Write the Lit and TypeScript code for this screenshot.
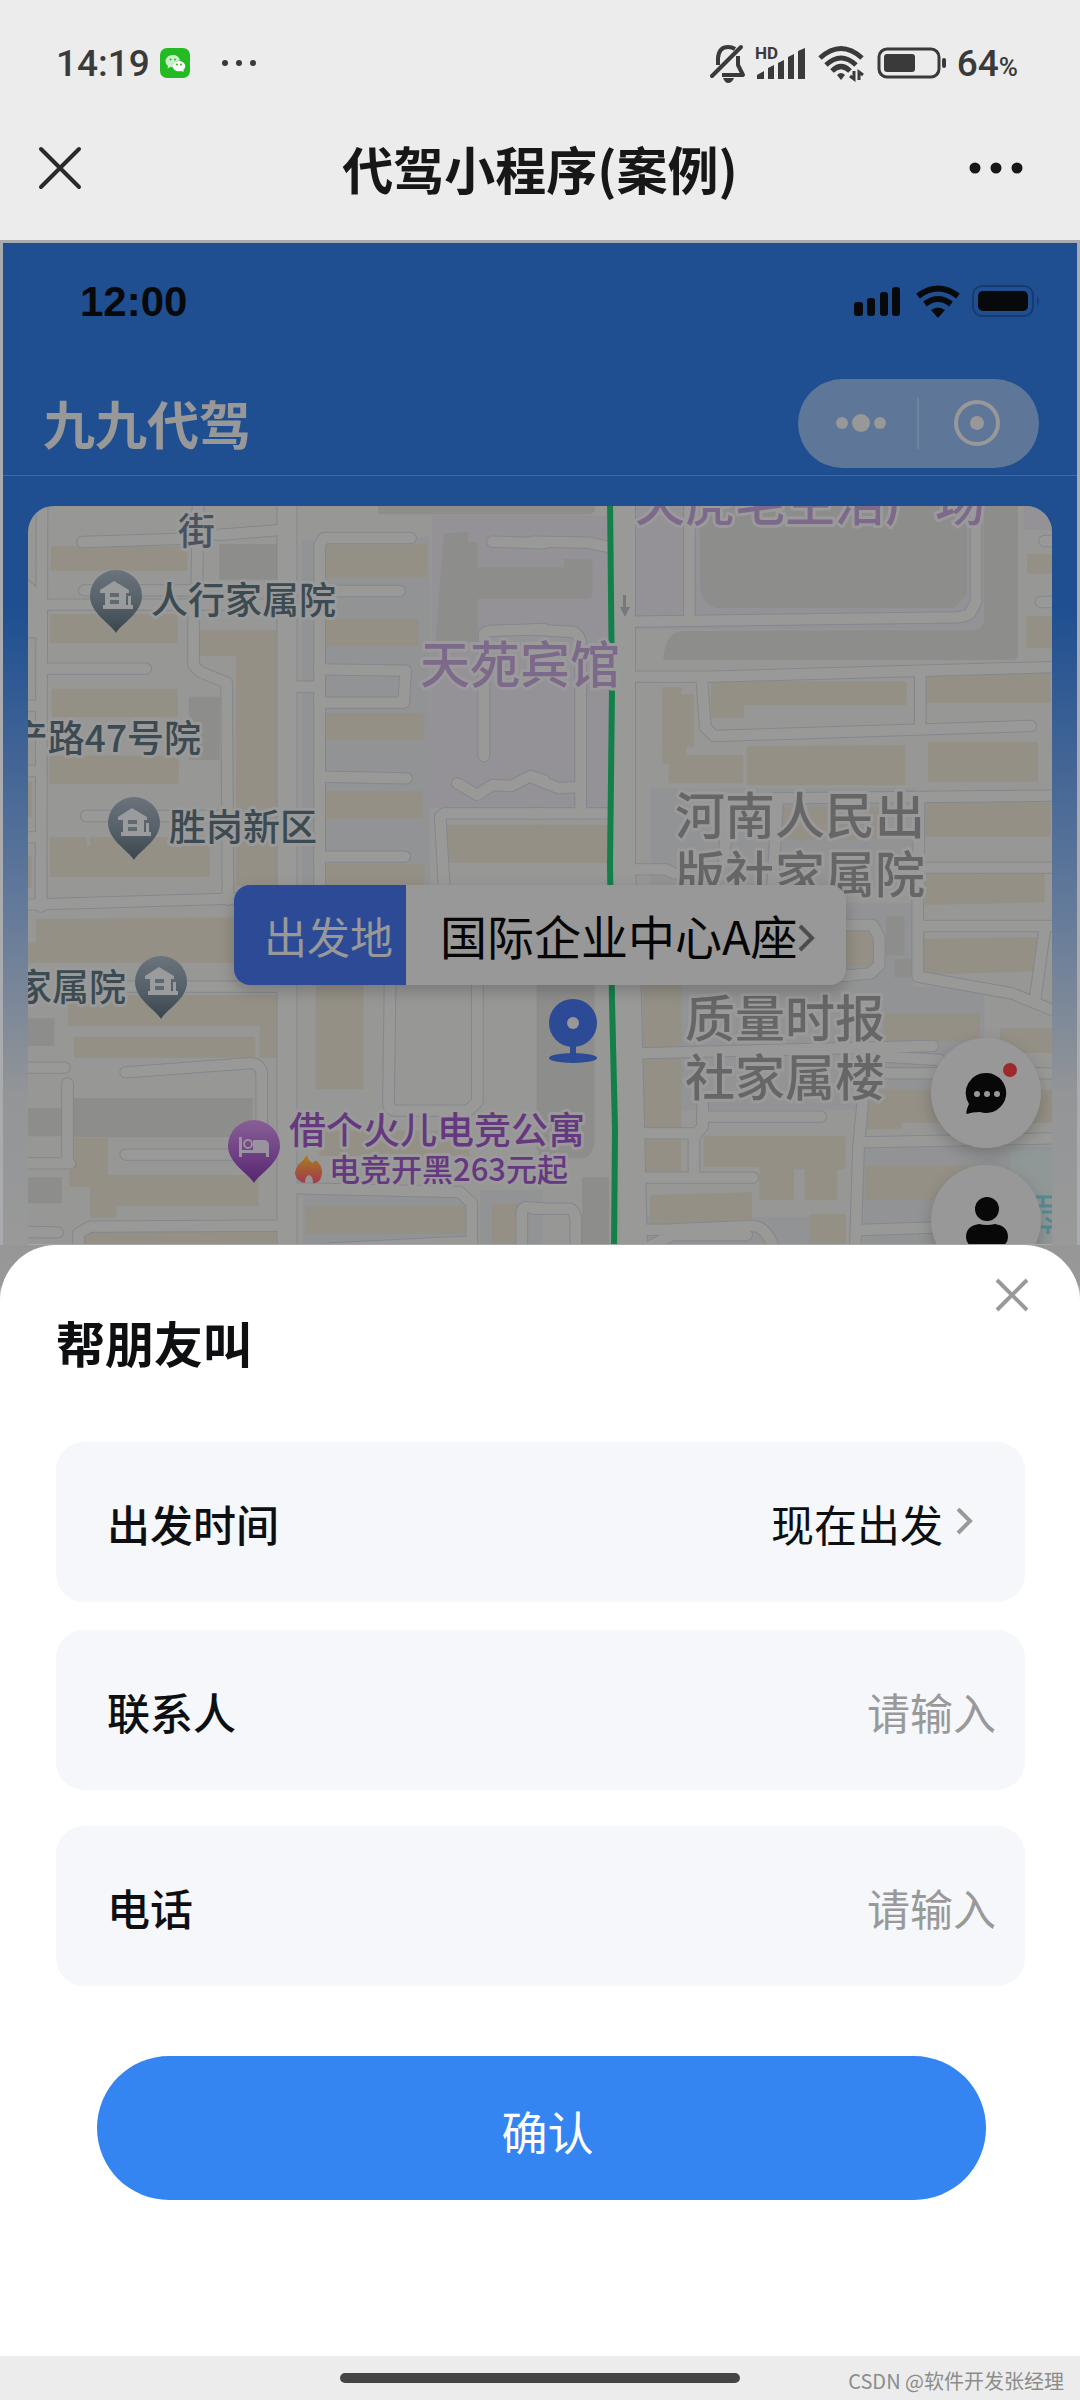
import { LitElement, html, svg, css } from "lit";
import { customElement, state } from "lit/decorators.js";

/* Map geometry, one tile per quarter of the map. */
interface Tile {
  transform: string;
  zones: [string, string][];
  tan: string[];
  roads: string[];
}

const rect = (x: number, y: number, w: number, h: number) => `M${x},${y}h${w}v${h}h${-w}z`;
const GREY = "#8d8d8b";
const MAUVE = "#959297";
const HAZE = "#929394";

const tiles: Tile[] = [
  {
    transform: "translate(0 480) scale(.3444 .3333)",
    zones: [
      [rect(877, 180, 34, 425), HAZE],
      [rect(877, 638, 34, 580), HAZE],
      [rect(943, 170, 304, 1048), HAZE],
      ["M1255,108H1575V983H1247L1252,600z", MAUVE],
      [rect(637, 192, 170, 107), GREY],
      [rect(548, 650, 90, 190), GREY],
      [rect(1098, 78, 475, 25), GREY],
      ["M1290,160L1360,156V186H1386V262H1575V356H1386V485H1265L1272,380z", GREY],
    ],
    tan: [
      rect(150, 202, 391, 68), rect(148, 405, 365, 82), "M565,454H802V1215H688V525H565z",
      rect(153, 629, 360, 80), rect(147, 830, 369, 80), "M148,1075H249V1102H265V1075H485V1095H606V1188H148z",
      rect(935, 196, 301, 93), rect(928, 420, 285, 76), rect(928, 702, 298, 75), rect(928, 937, 296, 76),
      rect(928, 1155, 302, 90), rect(1298, 1037, 280, 108), rect(75, 370, 14, 60), rect(75, 908, 14, 102),
      rect(75, 1130, 14, 90),
    ],
    roads: [
      "M240,186L545,176", "M630,165L838,148", "M575,60L572,300L562,420V555L580,575L658,608L662,1260",
      "M122,60L119,1280", "M70,312L92,330V440", "M70,457H120", "M70,677H120", "M70,873H120", "M70,1072H120",
      "M122,374H835", "M245,331H560", "M122,566L423,566", "M250,1008H660",
      "M1192,174H940L928,195V1260", "M928,333H1160", "M928,568L1178,572L1172,668H928", "M928,890L1180,895",
      "M928,1130H1175", "M850,620H928", "M1430,185L1580,190", "M1405,828V470Q1405,456 1420,453L1580,447",
      "M1328,910L1385,945L1430,915L1485,918L1540,888L1580,901", "M1292,1260L1278,1010L1288,1000H1580",
    ],
  },
  {
    transform: "translate(540 480) scale(.3444 .3333)",
    zones: [
      [rect(0, 108, 200, 875), MAUVE],
      ["M275,60H1290V430Q1285,448 1260,448H275z", MAUVE],
      [rect(1405, 60, 90, 90), MAUVE],
      ["M0,60H160V90Q155,103 140,103H0z", GREY],
      ["M0,262H70V237H140Q153,240 153,255V340Q152,356 138,356H0z", GREY],
      ["M463,60H1240V345L1200,384H515Q470,375 466,320z", GREY],
      ["M1290,60H1388V528Q1385,540 1370,540H358Q362,455 415,453L1262,449Q1288,445 1290,420z", GREY],
      [rect(320, 925, 770, 300), HAZE],
    ],
    tan: [
      "M358,625H408V645H445V797H422V828H587V907H377V848H358z", "M500,607H1062V673H590V710H500z",
      "M1113,582L1480,577V665H1113z", "M603,802L1058,798V913H603z", rect(1130, 789, 313, 113),
      rect(1122, 970, 358, 97), "M1122,1180L1462,1172V1260H1122z", rect(1417, 225, 80, 53),
      rect(1415, 412, 80, 90), rect(700, 985, 280, 90), rect(-5, 1037, 207, 108),
    ],
    roads: [
      "M434,60V410", "M270,425L1210,412Q1245,408 1250,398L1266,366V60", "M270,590H500L1495,561",
      "M470,600L480,742L505,768L1425,738", "M1104,580V745", "M680,955L1495,947", "M270,1168H365L390,1180",
      "M1100,955V1230", "M545,960L535,1140", "M690,960L675,1230", "M1100,1163H1495", "M1465,183H1500",
      "M1455,366H1500", "M-20,185L140,188L205,202", "M-20,449L95,456Q112,460 118,485V1000",
      "M-20,895L55,925L118,920", "M-20,1000H205",
    ],
  },
  {
    transform: "translate(0 860) scale(.3444 .3333)",
    zones: [
      [rect(880, 1005, 480, 150), HAZE],
      [rect(1395, 990, 180, 170), HAZE],
      [rect(70, 475, 88, 83), GREY],
      [rect(204, 714, 530, 118), GREY],
      [rect(70, 744, 113, 85), GREY],
      [rect(70, 952, 110, 78), GREY],
      [rect(1558, 370, 20, 500), GREY],
    ],
    tan: [
      "M107,180L700,175V305H75V250H107z", "M200,408H806V590H757V495H200z", rect(218, 533, 520, 57),
      rect(920, 350, 133, 335), "M204,836H310V948H748V1035H335V1070H265V978H204z", rect(240, 1118, 573, 50),
      rect(890, 1042, 465, 77), rect(1432, 1035, 70, 130), rect(930, 815, 430, 70),
    ],
    roads: [
      "M119,0V130", "M70,134L700,115", "M370,380H835", "M70,623H187", "M196,670V905", "M70,910H203",
      "M365,637L718,610Q758,605 760,645V800", "M365,884H760", "M70,1116L167,1117", "M228,1200V1120L262,1100L825,1097",
      "M866,985L1335,996L1370,1030V1200", "M1133,340L1128,730Q1130,752 1150,752H1360L1386,725V340",
      "M1515,1200V1055Q1520,1040 1535,1042L1580,1046", "M960,1165L1360,1145",
    ],
  },
  {
    transform: "translate(540 860) scale(.3444 .3333)",
    zones: [
      [rect(285, 130, 800, 250), HAZE],
      [rect(410, 380, 880, 370), HAZE],
      [rect(940, 860, 560, 300), HAZE],
      [rect(285, 1070, 600, 90), HAZE],
      ["M-5,360H158V850Q150,895 120,895H-5z", GREY],
      [rect(122, 952, 78, 210), GREY],
      [rect(1005, 168, 53, 118), GREY],
      [rect(1030, 298, 50, 55), GREY],
    ],
    tan: [
      rect(302, 375, 105, 575), "M1122,40L1462,32V124L1122,132z", "M1098,240L1446,234V330L1098,342z",
      rect(880, 210, 88, 105), rect(1000, 463, 275, 76), rect(1338, 508, 160, 68),
      "M948,692H1500V785H1046V805H948z", "M478,830H884V925H860V1018H772V925H735V1018H640V918H478z",
      "M948,920H1240V1018H948z", "M323,1008L612,1000V1090L323,1098z", rect(785, 1065, 100, 100),
    ],
    roads: [
      "M1097,0V350L1370,400L1500,455", "M1097,198H1480", "M1466,205L1438,415", "M880,195H965L985,232V315L960,340L880,348",
      "M285,580L1140,558", "M1000,590L1160,600", "M1000,640H1500", "M472,720V800L447,830V945", "M472,770H815",
      "M278,820H450", "M278,953H618", "M930,847L1500,835", "M937,730L925,860L915,1180",
      "M278,1110L380,1108L610,1098Q660,1095 685,1180", "M925,1110L1160,1102",
      "M-20,1046H85Q103,1050 104,1085V1180", "M278,1180L385,1125L600,1125",
    ],
  },
];

const housePin = (x: number, y: number) => svg`
  <g transform="translate(${x} ${y})">
    <path d="M0,36C-6,26 -26,16 -26,-1A26,26 0 0 1 26,-1C26,16 6,26 0,36z" fill="url(#slate)"/>
    <path d="M-16,-7L-2,-16L13,-7V-4H10V8H12V-1H15V8H17V12H-13V8H-11V-4H-16z" fill="#9a9b9d"/>
    <path d="M-6,-2H3M-6,5H3" stroke="#5f6970" stroke-width="4" fill="none"/>
  </g>`;

@customElement("map-canvas")
export class MapCanvas extends LitElement {
  static styles = css`
    :host { display: block; height: 100%; }
    .canvas { display: block; width: 100%; height: 100%; }
    .casing { fill: none; stroke: #84878d; stroke-width: 37; stroke-linecap: round; stroke-linejoin: round; }
    .road { fill: none; stroke: #999a98; stroke-width: 31; stroke-linecap: round; stroke-linejoin: round; }
    .tan { fill: #949086; stroke: #949086; stroke-width: 6; stroke-linejoin: round; }
    .label {
      font-family: "Noto Sans CJK SC", sans-serif;
      font-weight: 500;
      paint-order: stroke;
      stroke: #9a9a9a;
      stroke-width: 6px;
      stroke-linejoin: round;
    }
    .small { font-size: 31px; }
    .medium { font-size: 37px; }
    .large { font-size: 50px; }
    .slate { fill: #3c4a51; }
    .road-name { fill: #4a5260; }
    .lilac { fill: #7d6a8a; }
    .grey { fill: #666666; }
    .violet { fill: #65387f; }
  `;

  render() {
    return html`
      <svg class="canvas" viewBox="28 506 1024 740" preserveAspectRatio="xMidYMin slice" role="img" aria-label="地图">
        <defs>
          <linearGradient id="slate" x1="0" y1="0" x2="0" y2="1">
            <stop offset="0" stop-color="#6b737c"/><stop offset=".5" stop-color="#56616a"/><stop offset="1" stop-color="#3a464e"/>
          </linearGradient>
          <linearGradient id="violet" x1="0" y1="0" x2="0" y2="1">
            <stop offset="0" stop-color="#895f96"/><stop offset=".5" stop-color="#704286"/><stop offset="1" stop-color="#56266f"/>
          </linearGradient>
          <linearGradient id="flame" x1="0" y1="0" x2="0" y2="1">
            <stop offset="0" stop-color="#a8801f"/><stop offset=".5" stop-color="#a65a35"/><stop offset="1" stop-color="#a03a50"/>
          </linearGradient>
        </defs>
        <rect x="0" y="480" width="1080" height="800" fill="#979795"/>
        ${tiles.map((t) => svg`<g transform=${t.transform}>${t.zones.map(([d, c]) => svg`<path d=${d} fill=${c}/>`)}</g>`)}
        ${tiles.map((t) => svg`<g transform=${t.transform} class="tan">${t.tan.map((d) => svg`<path d=${d}/>`)}</g>`)}
        ${tiles.map((t) => svg`<g transform=${t.transform}>${t.roads.map((d) => svg`<path class="casing" d=${d}/>`)}</g>`)}
        <path d="M287,500V1250" stroke="#84878d" stroke-width="21"/>
        <path d="M623,500V870L628,960L635,1250" stroke="#84878d" stroke-width="26" fill="none"/>
        ${tiles.map((t) => svg`<g transform=${t.transform}>${t.roads.map((d) => svg`<path class="road" d=${d}/>`)}</g>`)}
        <path d="M287,500V1250" stroke="#999a98" stroke-width="19"/>
        <path d="M622,500V870L627,960L634,1250" stroke="#999a98" stroke-width="26" fill="none"/>
        <path d="M610,500L612,690L610,865L612,1000L615,1130L614,1250" stroke="#138049" stroke-width="6" fill="none"/>
        <path d="M623,595h3v12h4l-5,10l-5,-10h3z" fill="#77787a"/>
        <rect x="1010" y="1150" width="42" height="100" fill="#909797"/>
        <path d="M1036,1197H1052M1036,1206H1052M1043,1197V1206M1042,1212H1052M1046,1218L1052,1222M1041,1227H1052M1048,1227V1234" stroke="#568a93" stroke-width="3" fill="none"/>

        ${housePin(116, 597)} ${housePin(134, 824)} ${housePin(161, 983)}
        <g transform="translate(254 1147)">
          <path d="M0,36C-6,26 -26,16 -26,-1A26,26 0 0 1 26,-1C26,16 6,26 0,36z" fill="url(#violet)"/>
          <path d="M-15,-10H-12V3H-1V-7H11Q15,-6 15,-2V10H12V6H-12V10H-15z" fill="#9a929e"/>
          <circle cx="-6" cy="-3" r="4" fill="none" stroke="#9a929e" stroke-width="2"/>
        </g>

        <text class="label medium road-name" x="178" y="545">街</text>
        <text class="label medium slate" x="151" y="614">人行家属院</text>
        <text class="label medium slate" x="201" y="752" text-anchor="end">产路47号院</text>
        <text class="label medium slate" x="169" y="841">胜岗新区</text>
        <text class="label medium slate" x="126" y="1001" text-anchor="end">家属院</text>
        <text class="label large lilac" x="420" y="683">天苑宾馆</text>
        <text class="label large lilac" x="635" y="521">天虎毛生活广场</text>
        <text class="label large grey" x="675" y="834">河南人民出</text>
        <text class="label large grey" x="675" y="893">版社家属院</text>
        <text class="label large grey" x="685" y="1037">质量时报</text>
        <text class="label large grey" x="685" y="1096">社家属楼</text>
        <text class="label medium violet" x="289" y="1144">借个火儿电竞公寓</text>
        <path d="M307,1155Q308,1161 313,1163Q315,1159 318,1162Q325,1170 320,1180Q317,1184 313,1183Q313,1176 309,1175Q305,1176 305,1183Q297,1182 295,1174Q295,1169 299,1164Q304,1160 307,1155z" fill="url(#flame)"/>
        <text class="label small violet" x="329" y="1181">电竞开黑263元起</text>
      </svg>
    `;
  }
}

@customElement("app-root")
export class AppRoot extends LitElement {
  static styles = css`
    :host {
      display: block;
      font-family: "Noto Sans CJK SC", "Noto Sans", sans-serif;
      color: #0e0f11;
      background: #ffffff;
    }
    * { box-sizing: border-box; }
    button { border: 0; padding: 0; margin: 0; background: none; font: inherit; color: inherit; }
    svg { display: block; flex: none; }
    h1, h2, p { margin: 0; }

    .page { display: flex; flex-direction: column; min-height: 100vh; }

    .status {
      display: flex; align-items: center; height: 126px; padding: 0 62px 0 56px;
      background: #ececec; color: #3a3a3a; font-family: Roboto, sans-serif; font-weight: 500; font-size: 37px;
    }
    .wechat { margin-left: 10px; }
    .more { margin-left: 31px; }
    .system { display: flex; align-items: center; margin-left: auto; gap: 8px; }
    .charge { display: flex; align-items: baseline; }
    .percent { font-size: 26px; }
    .hd { font-family: Roboto, sans-serif; font-size: 17px; font-weight: 700; fill: #3a3a3a; }

    .nav {
      display: grid; grid-template-columns: 80px 1fr 80px; align-items: center;
      height: 114px; padding: 0 36px 30px; background: #ececec; color: #171717;
    }
    .nav-title { font-size: 51px; line-height: 60px; font-weight: 700; text-align: center; }
    .nav-more { justify-self: end; }

    .frame {
      border: solid #a9abae; border-width: 3px 3px 0;
      background: linear-gradient(#1f4f91 365px, #62799a 660px, #939597 850px, #999999 1000px);
    }
    .inner-status {
      display: flex; align-items: center; justify-content: space-between;
      padding: 24px 35px 0 77px; height: 94px;
      font-family: "Liberation Sans", sans-serif; font-weight: 700; font-size: 42px; color: #07090b;
    }
    .inner-bar {
      display: flex; align-items: center; justify-content: space-between;
      height: 139px; padding: 34px 38px 0 40px; border-bottom: 1px solid #4069a0; color: #989898;
    }
    .inner-title { font-size: 52px; line-height: 60px; font-weight: 700; }
    .capsule {
      display: flex; align-items: center; width: 241px; height: 89px;
      padding: 0 38px 0 37px; border-radius: 45px; background: #5e7697;
    }
    .capsule-line { flex: none; width: 2px; height: 51px; margin-left: 30px; margin-right: 34px; background: #7083a0; }

    .map {
      position: relative; height: 739px; margin: 30px 25px 0; overflow: hidden;
      border-radius: 26px 26px 0 0; border-bottom: 1px solid #a8a8a8;
    }
    .origin {
      position: absolute; top: 379px; left: 50%; transform: translateX(-50%);
      display: flex; height: 100px; width: 612px; border-radius: 16px; background: #989898;
      box-shadow: 0 6px 16px rgba(0, 0, 0, 0.2); font-size: 47px; line-height: 100px; text-align: left; color: #060606;
      white-space: nowrap;
    }
    .origin-tag {
      flex: none; width: 172px; padding-left: 30px; border-radius: 16px 0 0 16px;
      background: #2c4a95; color: #989898; font-size: 43px;
    }
    .origin-name { padding-left: 34px; }
    .origin-arrow { margin-top: 38px; }
    .here { position: absolute; top: 492px; left: 50%; margin-left: 8px; }
    .tools { position: absolute; top: 532px; right: 11px; display: flex; flex-direction: column; gap: 17px; }
    .tool {
      position: relative; display: flex; align-items: center; justify-content: center;
      width: 110px; height: 110px; border-radius: 50%; background: #989898; box-shadow: 0 6px 16px rgba(0, 0, 0, 0.2);
    }
    .badge { position: absolute; top: 25px; right: 24px; width: 14px; height: 14px; border-radius: 50%; background: #9d292b; }

    .sheet-back { display: flex; flex: 1; background: linear-gradient(#969696, #999999 40px, #ffffff 60px); }
    .sheet {
      display: flex; flex-direction: column; flex: 1; padding: 33px 55px 0 56px;
      border-radius: 56px 56px 0 0; background: #ffffff;
    }
    .sheet-close { align-self: flex-end; margin-right: -4px; }
    .sheet-title { margin: 0 0 70px; font-size: 49px; line-height: 60px; font-weight: 700; }
    .fields { display: flex; flex-direction: column; gap: 28px; }
    .field {
      display: flex; align-items: center; justify-content: space-between; height: 160px; width: 100%;
      padding: 2px 52px 0 51px; border-radius: 28px; background: #f5f7fb; font-size: 43px; line-height: 60px; text-align: left;
    }
    .field.entry { padding-right: 29px; }
    .field:last-child { margin-top: 8px; }
    .field-name { font-weight: 500; }
    .field-value { display: flex; align-items: center; gap: 12px; }
    .field-input {
      flex: 1; min-width: 0; height: 80px; border: 0; padding: 0; outline: none; background: none;
      font: inherit; color: inherit; text-align: right;
    }
    .field-input::placeholder { color: #999999; opacity: 1; }
    .confirm {
      height: 144px; margin: 70px 39px 60px 41px; padding: 4px 0 0 12px; border-radius: 72px;
      background: #3484f1; color: #ffffff; font-size: 46px;
    }

    .footer {
      display: grid; grid-template-columns: 1fr 400px 1fr; align-items: center; height: 44px;
      padding: 0 16px; background: #ececec;
    }
    .home { grid-column: 2; height: 10px; border-radius: 5px; background: #444444; }
    .credit { justify-self: end; font-size: 20px; line-height: 30px; color: #8c8c8c; white-space: nowrap; padding-top: 6px; }
  `;

  @state() private contact = "";
  @state() private phone = "";

  render() {
    return html`
      <div class="page">
        <div class="status">
          <span>14:19</span>
          <svg class="wechat" width="30" height="30" viewBox="0 0 30 30" aria-label="微信">
            <rect width="30" height="30" rx="7" fill="#23ba22"/>
            <path d="M13,7C8.500,7 5.500,10 5.500,13.300C5.500,15.300 6.600,17 8,18L7.500,20.500L10.500,19C11.500,19.300 12.200,19.300 13,19.200C12.300,15.500 15.500,12.500 20,12.400C19.300,9 16.500,7 13,7z" fill="#cdeecb"/>
            <path d="M19,13C15.500,13 12.800,15.300 12.800,18.200C12.800,21.200 15.500,23.300 19,23.300C19.900,23.300 20.700,23.200 21.500,22.900L23.800,24L23.300,22C24.500,21.100 25.200,19.700 25.200,18.200C25.200,15.300 22.500,13 19,13z" fill="#fff"/>
            <g fill="#23ba22"><circle cx="10.500" cy="11.500" r="1"/><circle cx="15" cy="11.500" r="1"/><circle cx="17" cy="16.500" r="1"/><circle cx="21" cy="16.500" r="1"/></g>
          </svg>
          <svg class="more" width="36" height="8" viewBox="0 0 36 8" fill="#3a3a3a"><circle cx="4" cy="4" r="3"/><circle cx="18" cy="4" r="3"/><circle cx="32" cy="4" r="3"/></svg>
          <div class="system">
            <svg width="38" height="40" viewBox="0 0 38 40" fill="none" stroke="#3a3a3a" stroke-width="4">
              <path d="M3,33L32,4" stroke-linecap="round"/><path d="M9,22V15Q10,4 19,4Q23,4 26,6"/>
              <path d="M29,13V22L34,32H13" stroke-linejoin="round"/>
              <path d="M14,35H25Q23,40 19,40Q16,40 14,35z" fill="#3a3a3a" stroke="none"/>
            </svg>
            <svg width="54" height="36" viewBox="0 0 54 36" fill="#3a3a3a">
              <text class="hd" x="0" y="14">HD</text>
              <path d="M2,34V30L9,26V34zM13,34V23L19,20V34zM23,34V18L29,15V34zM33,34V12L39,9V34zM43,34V6L50,3V34z"/>
            </svg>
            <svg width="50" height="38" viewBox="0 0 50 38" fill="none" stroke="#3a3a3a" stroke-width="5">
              <path d="M3,14Q24,-5 45,14"/><path d="M9,21Q24,7 39,21"/><path d="M15,27Q24,18 33,27"/>
              <path d="M20,31Q24,27 28,31L24,36z" fill="#3a3a3a" stroke="none"/>
              <path d="M37,27V35L33,32M42,36V28L46,31" stroke-width="3"/>
            </svg>
            <svg width="74" height="32" viewBox="0 0 74 32">
              <rect x="4" y="2" width="60" height="28" rx="8" fill="none" stroke="#3a3a3a" stroke-width="3"/>
              <rect x="9" y="7" width="31" height="18" rx="3" fill="#3a3a3a"/><rect x="67" y="11" width="4" height="10" rx="2" fill="#3a3a3a"/>
            </svg>
            <span class="charge">64<span class="percent">%</span></span>
          </div>
        </div>

        <header class="nav">
          <button aria-label="关闭">
            <svg width="48" height="48" viewBox="0 0 48 48" stroke="#2a2a2a" stroke-width="4" stroke-linecap="round"><path d="M5,5L43,43M43,5L5,43"/></svg>
          </button>
          <h1 class="nav-title">代驾小程序(案例)</h1>
          <button class="nav-more" aria-label="更多">
            <svg width="80" height="12" viewBox="0 0 80 12" fill="#171717"><circle cx="11" cy="6" r="5.500"/><circle cx="32" cy="6" r="5.500"/><circle cx="53" cy="6" r="5.500"/></svg>
          </button>
        </header>

        <section class="frame">
          <div class="inner-status">
            <span>12:00</span>
            <svg width="188" height="34" viewBox="0 0 188 34">
              <g fill="#07090b">
                <rect x="0" y="17" width="9" height="14" rx="3"/><rect x="13" y="13" width="8" height="18" rx="3"/>
                <rect x="26" y="7" width="8" height="24" rx="3"/><rect x="38" y="2" width="8" height="29" rx="3"/>
                <path d="M77,25Q84,20 91,25L84,33z"/>
              </g>
              <g fill="none" stroke="#07090b" stroke-width="6"><path d="M64,11Q84,-4 104,11"/><path d="M71,19Q84,9 97,19"/></g>
              <rect x="119" y="1" width="60" height="30" rx="9" fill="none" stroke="#163c6e" stroke-width="2"/>
              <rect x="124" y="6" width="50" height="20" rx="5" fill="#07090b"/><path d="M183,11Q187,16 183,21z" fill="#163c6e"/>
            </svg>
          </div>
          <div class="inner-bar">
            <h2 class="inner-title">九九代驾</h2>
            <div class="capsule">
              <button aria-label="菜单"><svg width="52" height="20" viewBox="0 0 52 20" fill="#989898"><circle cx="7" cy="10" r="6"/><circle cx="26" cy="10" r="9"/><circle cx="45" cy="10" r="6"/></svg></button>
              <span class="capsule-line"></span>
              <button aria-label="退出"><svg width="48" height="48" viewBox="0 0 48 48"><circle cx="24" cy="24" r="21" fill="none" stroke="#989898" stroke-width="4"/><circle cx="24" cy="24" r="7" fill="#989898"/></svg></button>
            </div>
          </div>
          <div class="map">
            <map-canvas></map-canvas>
            <button class="origin">
              <span class="origin-tag">出发地</span>
              <span class="origin-name">国际企业中心A座</span>
              <svg class="origin-arrow" width="18" height="30" viewBox="0 0 18 30" fill="none" stroke="#4c4c4c" stroke-width="4"><path d="M2,3L14,15L2,27"/></svg>
            </button>
            <svg class="here" width="50" height="66" viewBox="0 0 50 66" fill="#2c4a95">
              <circle cx="25" cy="25" r="24"/><circle cx="25" cy="25" r="6" fill="#989898"/>
              <path d="M22,48h6v10h-6z"/><ellipse cx="25" cy="60" rx="24" ry="5"/>
            </svg>
            <div class="tools">
              <button class="tool" aria-label="消息">
                <svg width="44" height="44" viewBox="0 0 44 44"><path d="M23,2A20,20 0 1 1 16,41Q8,41 3,43Q1,42 5,33A20,20 0 0 1 23,2z" fill="#080808"/><g fill="#989898"><circle cx="13" cy="23" r="3"/><circle cx="23" cy="23" r="3"/><circle cx="33" cy="23" r="3"/></g></svg>
                <span class="badge"></span>
              </button>
              <button class="tool" aria-label="我的">
                <svg width="44" height="54" viewBox="0 0 44 54" fill="#080808"><circle cx="23" cy="16" r="12"/><path d="M15,31Q23,33 31,31Q44,33 44,44Q44,54 31,54H15Q2,54 2,44Q2,33 15,31z"/></svg>
              </button>
            </div>
          </div>
        </section>

        <div class="sheet-back">
          <form class="sheet" @submit=${(e: Event) => e.preventDefault()}>
            <button class="sheet-close" type="button" aria-label="关闭">
              <svg width="34" height="34" viewBox="0 0 34 34" stroke="#999999" stroke-width="4"><path d="M2,2L32,32M32,2L2,32"/></svg>
            </button>
            <h2 class="sheet-title">帮朋友叫</h2>
            <div class="fields">
              <button class="field" type="button">
                <span class="field-name">出发时间</span>
                <span class="field-value">现在出发
                  <svg width="18" height="30" viewBox="0 0 18 30" fill="none" stroke="#999999" stroke-width="4"><path d="M3,1L15,13L3,25"/></svg>
                </span>
              </button>
              <div class="field entry">
                <label class="field-name" for="contact">联系人</label>
                <input class="field-input" id="contact" type="text" placeholder="请输入" .value=${this.contact}
                  @input=${(e: Event) => (this.contact = (e.target as HTMLInputElement).value)} />
              </div>
              <div class="field entry">
                <label class="field-name" for="phone">电话</label>
                <input class="field-input" id="phone" type="tel" placeholder="请输入" .value=${this.phone}
                  @input=${(e: Event) => (this.phone = (e.target as HTMLInputElement).value)} />
              </div>
            </div>
            <button class="confirm" type="submit">确认</button>
          </form>
        </div>

        <footer class="footer">
          <span class="home"></span>
          <span class="credit">CSDN @软件开发张经理</span>
        </footer>
      </div>
    `;
  }
}
